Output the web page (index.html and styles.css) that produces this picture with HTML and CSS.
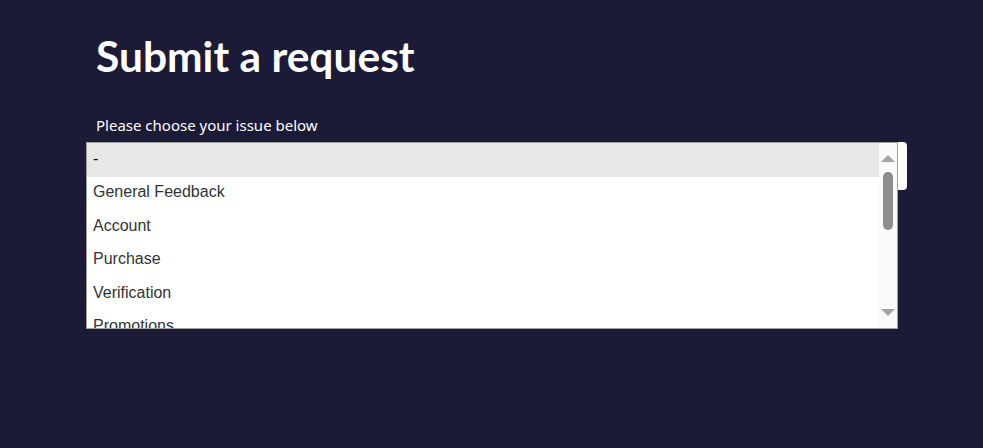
FILE: index.html
```html
<!DOCTYPE html>
<html lang="en">
<head>
<meta charset="utf-8">
<title>Submit a request</title>
<link rel="stylesheet" href="styles.css">
</head>
<body>
<main class="page">
  <h1 class="title">Submit a request</h1>
  <div class="field">
    <label class="label">Please choose your issue below</label>
    <div class="select-wrap">
      <div class="select"></div>
      <div class="listbox">
        <div class="options">
          <div class="option selected">-</div>
          <div class="option">General Feedback</div>
          <div class="option">Account</div>
          <div class="option">Purchase</div>
          <div class="option">Verification</div>
          <div class="option">Promotions</div>
        </div>
        <div class="scrollbar">
          <svg class="arrow" width="14" height="7" viewBox="0 0 14 7"><polygon points="7,0 14,7 0,7" fill="#a3a3a3"/></svg>
          <div class="thumb-area"><div class="thumb"></div></div>
          <svg class="arrow" width="14" height="7" viewBox="0 0 14 7"><polygon points="0,0 14,0 7,7" fill="#a3a3a3"/></svg>
        </div>
      </div>
    </div>
  </div>
</main>
</body>
</html>
```
FILE: styles.css
```css
html, body {
  margin: 0;
  padding: 0;
  background: #1b1a37;
}
body {
  font-family: "Noto Sans", "Open Sans", sans-serif;
  color: #fff;
}
.page {
  padding: 27px 76px 0 86px;
}
.title {
  margin: 0 0 0 10px;
  font-family: Lato, "Noto Sans", sans-serif;
  font-size: 42.5px;
  font-weight: 700;
  line-height: 58px;
  color: #fff;
}
.field {
  margin-top: 30px;
}
.label {
  display: block;
  margin-left: 10px;
  font-size: 15px;
  line-height: 20px;
  color: #fff;
}
.select-wrap {
  display: grid;
  margin-top: 7px;
  width: 821px;
}
.select,
.listbox {
  grid-area: 1 / 1;
  align-self: start;
}
.select {
  height: 48px;
  background: #fff;
  border-radius: 4px;
}
.listbox {
  width: 810px;
  height: 185px;
  border: 1px solid #a0a0a0;
  background: #fff;
  display: flex;
  overflow: hidden;
  font-family: "Liberation Sans", Arial, sans-serif;
  font-size: 16px;
}
.options {
  flex: 1;
  overflow: hidden;
}
.option {
  height: 33.6px;
  box-sizing: border-box;
  padding: 6.5px 0 0 6px;
  line-height: 18.4px;
  color: #333;
}
.option.selected {
  background: #e8e8e8;
  color: #000;
}
.scrollbar {
  width: 18px;
  background: #fafafa;
  display: flex;
  flex-direction: column;
  align-items: center;
  padding: 12px 0 12px;
  box-sizing: border-box;
}
.arrow {
  display: block;
  flex: none;
}
.thumb-area {
  flex: 1;
  width: 100%;
  display: flex;
  justify-content: center;
  padding-top: 10px;
}
.thumb {
  width: 10px;
  height: 58px;
  border-radius: 5px;
  background: #8d8d8d;
}
```
